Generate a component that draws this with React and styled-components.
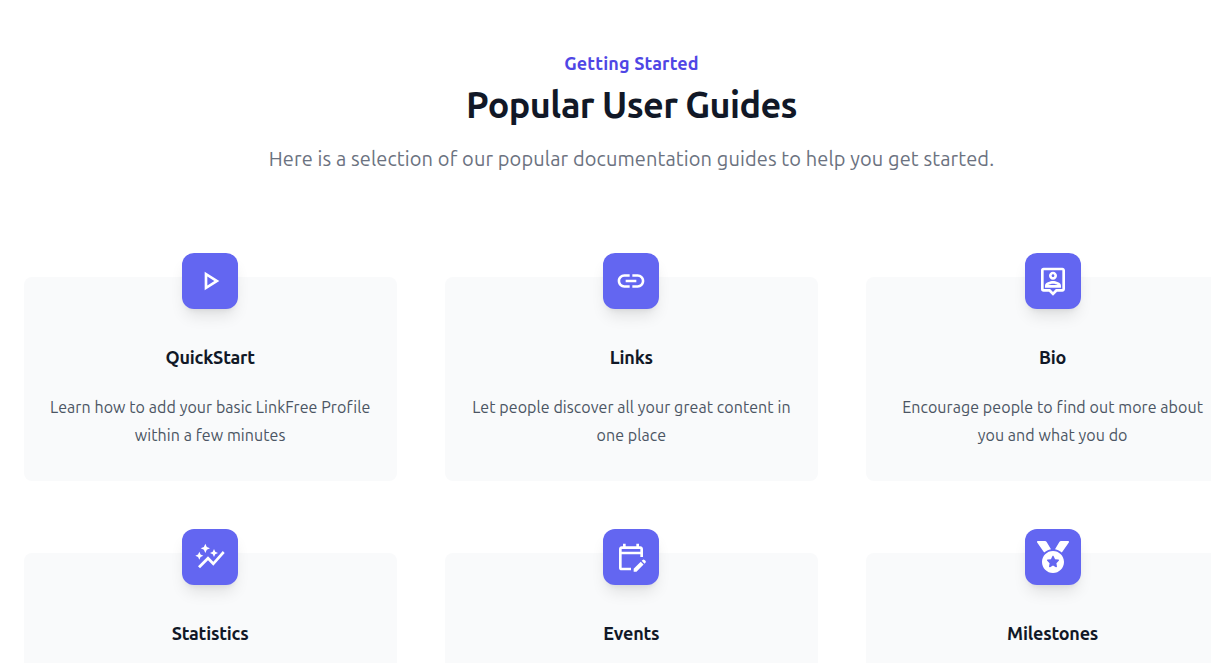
import styled, { createGlobalStyle } from 'styled-components';
import {
  MdOutlinePlayArrow,
  MdLink,
  MdOutlinePersonPin,
  MdAutoGraph,
  MdOutlineEditCalendar,
} from 'react-icons/md';
import { FaMedal } from 'react-icons/fa';

const guides = [
  {
    name: 'QuickStart',
    description: 'Learn how to add your basic LinkFree Profile within a few minutes',
    icon: MdOutlinePlayArrow,
  },
  {
    name: 'Links',
    description: 'Let people discover all your great content in one place',
    icon: MdLink,
  },
  {
    name: 'Bio',
    description: 'Encourage people to find out more about you and what you do',
    icon: MdOutlinePersonPin,
  },
  { name: 'Statistics', icon: MdAutoGraph },
  { name: 'Events', icon: MdOutlineEditCalendar },
  { name: 'Milestones', icon: FaMedal },
];

export default function App() {
  return (
    <>
      <GlobalStyle />
      <Page>
        <Header>
          <Eyebrow>Getting Started</Eyebrow>
          <Title>Popular User Guides</Title>
          <Subtitle>
            Here is a selection of our popular documentation guides to help you get started.
          </Subtitle>
        </Header>
        <Grid>
          {guides.map((guide) => {
            const Icon = guide.icon;
            return (
              <GridItem key={guide.name}>
                <Card>
                  <IconBadge>
                    <Icon size={32} />
                  </IconBadge>
                  <CardTitle>{guide.name}</CardTitle>
                  {guide.description && <CardText>{guide.description}</CardText>}
                </Card>
              </GridItem>
            );
          })}
        </Grid>
      </Page>
    </>
  );
}

const GlobalStyle = createGlobalStyle`
  html, body {
    margin: 0;
    height: 100%;
    overflow: hidden;
    background: #ffffff;
  }
  body {
    font-family: Ubuntu, "Noto Sans", sans-serif;
  }
`;

const Page = styled.div`
  width: 1263px;
  box-sizing: border-box;
  padding: 49px 24px 48px;
`;

const Header = styled.div`
  text-align: center;
`;

const Eyebrow = styled.h2`
  margin: 0;
  font-size: 18px;
  line-height: 28px;
  font-weight: 700;
  letter-spacing: 0.15px;
  color: #4f46e5;
`;

const Title = styled.p`
  margin: 8px 0 0;
  font-size: 36px;
  line-height: 40px;
  font-weight: 700;
  letter-spacing: -0.6px;
  color: #111827;
`;

const Subtitle = styled.p`
  margin: 20px 0 0;
  font-size: 20px;
  line-height: 28px;
  letter-spacing: 0.11px;
  color: #6b7280;
`;

const Grid = styled.div`
  display: grid;
  grid-template-columns: repeat(3, 373.25px);
  gap: 48px;
  margin: 80px 0 0 -0.5px;
`;

const GridItem = styled.div`
  padding-top: 24px;
`;

const Card = styled.div`
  display: flow-root;
  padding: 0 24px 32px;
  border-radius: 8px;
  background: #f9fafb;
  text-align: center;
`;

const IconBadge = styled.span`
  display: inline-flex;
  margin-top: -24px;
  padding: 12px;
  border-radius: 12px;
  background: #6366f1;
  color: #ffffff;
  box-shadow: 0 10px 15px -3px rgba(0, 0, 0, 0.1), 0 4px 6px -4px rgba(0, 0, 0, 0.1);
`;

const CardTitle = styled.h3`
  margin: 32px 0 0;
  font-size: 18px;
  line-height: 32px;
  font-weight: 700;
  letter-spacing: -0.2px;
  color: #111827;
`;

const CardText = styled.p`
  margin: 20px 0 0;
  font-size: 16px;
  line-height: 28px;
  letter-spacing: 0.07px;
  color: #4b5563;
`;
